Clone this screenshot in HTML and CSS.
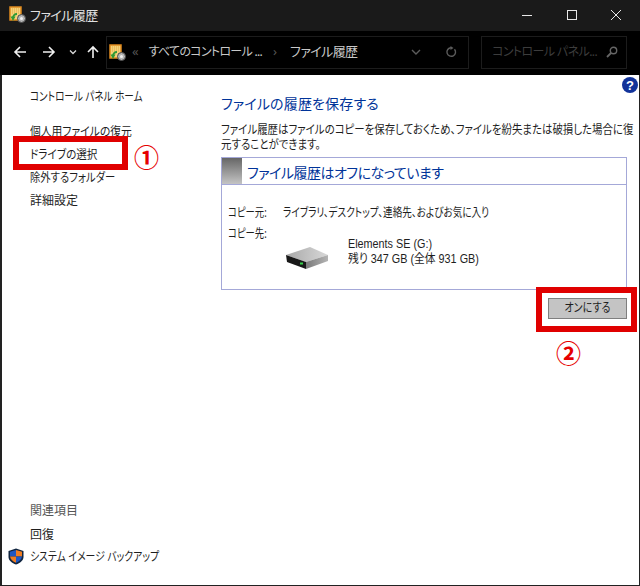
FILE: index.html
```html
<!DOCTYPE html>
<html lang="ja">
<head>
<meta charset="utf-8">
<title>ファイル履歴</title>
<link rel="stylesheet" href="styles.css">
</head>
<body>
<div class="window">
  <header class="titlebar">
    <svg class="fh-icon" viewBox="0 0 17 17"><rect x="1" y="1" width="11" height="13" fill="#f6d27a" stroke="#e08a1e" stroke-width="1.500"/><path d="M3 3h7M3 5h7M3 7h7" stroke="#e0a93f" stroke-dasharray="1 1"/><circle cx="12.500" cy="12.500" r="4" fill="#b4b4b4" stroke="#4a4a4a"/><circle cx="12.500" cy="12.500" r="1.500" fill="#f0f0f0"/><path d="M8 8a4 4 0 0 0-4 4" stroke="#2f9a36" stroke-width="2.200" fill="none"/><path d="M1.500 10.500h5L4 15z" fill="#2f9a36"/></svg>
    <span class="title">ファイル履歴</span>
    <div class="winbtns">
      <svg class="wb" viewBox="0 0 44.500 30"><path d="M17 15.500h10" stroke="#e8e8e8" fill="none"/></svg>
      <svg class="wb" viewBox="0 0 44.500 30"><rect x="17.500" y="10.500" width="9" height="9" stroke="#e8e8e8" fill="none"/></svg>
      <svg class="wb" viewBox="0 0 44.500 30"><path d="M17 10l10 10M27 10l-10 10" stroke="#e8e8e8" fill="none"/></svg>
    </div>
  </header>
  <nav class="navbar">
    <svg class="nb back" viewBox="0 0 14 14"><path d="M13 7H2M7 2L2 7l5 5" stroke="#f0f0f0" stroke-width="1.600" fill="none"/></svg>
    <svg class="nb fwd" viewBox="0 0 14 14"><path d="M1 7h11M7 2l5 5-5 5" stroke="#f0f0f0" stroke-width="1.600" fill="none"/></svg>
    <svg class="nb drop" viewBox="0 0 8 6"><path d="M1 1.500l3 3 3-3" stroke="#d8d8d8" stroke-width="1.300" fill="none"/></svg>
    <svg class="nb up" viewBox="0 0 14 14"><path d="M7 13V2M2 7l5-5 5 5" stroke="#f0f0f0" stroke-width="1.600" fill="none"/></svg>
    <div class="addr">
      <svg class="fh-icon" viewBox="0 0 17 17"><rect x="1" y="1" width="11" height="13" fill="#f6d27a" stroke="#e08a1e" stroke-width="1.500"/><path d="M3 3h7M3 5h7M3 7h7" stroke="#e0a93f" stroke-dasharray="1 1"/><circle cx="12.500" cy="12.500" r="4" fill="#b4b4b4" stroke="#4a4a4a"/><circle cx="12.500" cy="12.500" r="1.500" fill="#f0f0f0"/><path d="M8 8a4 4 0 0 0-4 4" stroke="#2f9a36" stroke-width="2.200" fill="none"/><path d="M1.500 10.500h5L4 15z" fill="#2f9a36"/></svg>
      <span class="crumb-sep">«</span>
      <span class="crumb crumb-all">すべてのコントロール ...</span>
      <span class="crumb-sep gt">›</span>
      <span class="crumb crumb-cur">ファイル履歴</span>
      <svg class="addr-drop" viewBox="0 0 10 6"><path d="M1 1l4 4 4-4" stroke="#5c5c5c" stroke-width="1.400" fill="none"/></svg>
      <svg class="refresh" viewBox="0 0 12 12"><path d="M9.500 3.200A4.300 4.300 0 1 1 6 1.700" stroke="#5c5c5c" stroke-width="1.400" fill="none"/><path d="M5.500 0v4l3-2z" fill="#5c5c5c"/></svg>
    </div>
    <div class="search">
      <span class="search-text">コントロール パネル...</span>
      <svg class="search-icon" viewBox="0 0 12 12"><circle cx="7.500" cy="4.500" r="3.200" stroke="#666" stroke-width="1.400" fill="none"/><path d="M5 7L1 11" stroke="#666" stroke-width="1.800"/></svg>
    </div>
  </nav>
  <div class="content">
    <aside class="sidebar">
      <a class="link home"><span class="sq sq-80">コントロール パネル ホーム</span></a>
      <ul class="tasks">
        <li class="link"><span class="sq sq-90">個人用ファイルの復元</span></li>
        <li class="link"><span class="sq sq-88">ドライブの選択</span></li>
        <li class="link"><span class="sq sq-86">除外するフォルダー</span></li>
        <li class="link">詳細設定</li>
      </ul>
      <div class="related">
        <div class="rel-title">関連項目</div>
        <div class="link">回復</div>
        <div class="link shield-row">
          <svg class="shield" viewBox="0 0 16 17"><path d="M8 .5L15.500 3v6c0 3.500-3.500 6-7.500 7.500C4 15 .5 12.500.5 9V3z" fill="#10243f"/><path d="M8 2L2 3.800V8.500h6z" fill="#1f57c3"/><path d="M8 2l6 1.800V8.500H8z" fill="#ef7d22"/><path d="M2 8.500h6v6.200C5 13.500 2.300 11.500 2 8.500z" fill="#ef7d22"/><path d="M8 8.500h6c-.3 3-3 5-6 6.200z" fill="#1f57c3"/></svg>
          <span class="sq sq-82">システム イメージ バックアップ</span>
        </div>
      </div>
    </aside>
    <main class="main">
      <svg class="help" viewBox="0 0 16 16"><circle cx="8" cy="8" r="8" fill="#12339a"/><text x="8" y="12.500" text-anchor="middle" class="help-q">?</text></svg>
      <h1 class="heading">ファイルの履歴を保存する</h1>
      <p class="desc">ファイル履歴はファイルのコピーを保存しておくため、ファイルを紛失または破損した場合に復元することができます。</p>
      <section class="panel">
        <div class="panel-head">
          <div class="swatch"></div>
          <h2 class="status">ファイル履歴はオフになっています</h2>
        </div>
        <div class="panel-body">
          <div class="row">
            <span class="label"><span class="sq sq-78">コピー元:</span></span>
            <span class="sq sq-80">ライブラリ、デスクトップ、連絡先、およびお気に入り</span>
          </div>
          <div class="row dest">
            <span class="label"><span class="sq sq-78">コピー先:</span></span>
            <div class="drive">
              <svg class="hdd" viewBox="0 0 44 24">
                <defs><linearGradient id="top" x1="0" x2="1" y1="0" y2="0"><stop offset="0" stop-color="#a8a8a8"/><stop offset="1" stop-color="#d8d8d8"/></linearGradient>
                <linearGradient id="side" x1="0" x2="1" y1="0" y2="0"><stop offset="0" stop-color="#7a7a7a"/><stop offset="1" stop-color="#b4b4b4"/></linearGradient></defs>
                <path d="M0 9L24 1l18 8-22 7z" fill="url(#top)"/>
                <path d="M0 9l20 7v7L1 16z" fill="#181818"/>
                <path d="M20 16l22-7v6L20 23z" fill="url(#side)"/>
                <rect x="14" y="16.500" width="3" height="2" fill="#34d04a"/>
              </svg>
              <div class="drive-text">
                <div class="sq sq-90">Elements SE (G:)</div>
                <div class="sq sq-90">残り 347 GB (全体 931 GB)</div>
              </div>
            </div>
          </div>
        </div>
      </section>
      <div class="actions">
        <button class="btn"><span class="sq sq-84">オンにする</span></button>
      </div>
    </main>
  </div>
</div>
<div class="mark mark-drive"></div>
<div class="mark mark-btn"></div>
<span class="num num-1">①</span>
<span class="num num-2">②</span>
</body>
</html>
```
FILE: styles.css
```css
* { box-sizing: border-box; }
html, body { margin: 0; padding: 0; }
body {
  width: 640px;
  height: 586px;
  overflow: hidden;
  position: relative;
  font-family: "Noto Sans", "Noto Sans CJK JP", sans-serif;
  font-feature-settings: "palt";
  font-size: 12px;
  color: #1e1e1e;
  background: #fff;
}
.sq { display: inline-block; white-space: nowrap; transform-origin: left center; }
.sq-78 { transform: scaleX(.78); }
.sq-80 { transform: scaleX(.8); }
.sq-82 { transform: scaleX(.82); }
.sq-84 { transform: scaleX(.84); }
.sq-86 { transform: scaleX(.86); }
.sq-88 { transform: scaleX(.88); }
.sq-90 { transform: scaleX(.9); }
.window { width: 640px; height: 586px; display: flex; flex-direction: column; border: solid #222; border-width: 0 1px 1px 2px; }
.titlebar { height: 31px; background: #1a1a1a; display: flex; align-items: center; padding: 0 0 2px 9px; flex: none; margin: 0 -1px 0 -2px; }
.fh-icon { width: 17px; height: 17px; flex: none; }
.title { color: #e0e0e0; font-size: 13px; margin-left: 4px; letter-spacing: -.55px; }
.winbtns { margin-left: auto; display: flex; padding-right: 1.5px; align-self: flex-start; }
.wb { width: 44.5px; height: 30px; display: block; }
.navbar { height: 44px; background: #000; display: flex; align-items: center; flex: none; margin: 0 -1px 0 -2px; padding-bottom: 2px; }
.nb { display: block; flex: none; }
.back { width: 14px; height: 14px; margin-left: 13px; }
.fwd { width: 14px; height: 14px; margin-left: 15px; }
.drop { width: 8px; height: 6px; margin-left: 13px; }
.up { width: 14px; height: 14px; margin-left: 9px; }
.addr { width: 363px; height: 33px; margin-left: 6px; border: 1px solid #1c1c1c; display: flex; align-items: center; padding-left: 2px; color: #c8c8c8; }
.crumb { white-space: nowrap; padding-bottom: 3px; }
.crumb-all { font-size: 12px; letter-spacing: -.7px; }
.crumb-cur { font-size: 13px; letter-spacing: -.6px; }
.crumb-sep { color: #555; margin: 0 10px 0 6px; font-size: 13px; padding-bottom: 3px; }
.crumb-sep.gt { margin: 0 13px 0 11px; }
.addr-drop { width: 10px; height: 6px; margin-left: auto; }
.refresh { width: 12px; height: 12px; margin: 0 11px 0 24px; }
.search { width: 146px; height: 33px; margin-left: 12px; border: 1px solid #1c1c1c; display: flex; align-items: center; padding: 0 8px 0 10px; color: #3c3c3c; }
.search-text { font-size: 12px; letter-spacing: -.6px; white-space: nowrap; padding-bottom: 3px; }
.search-icon { width: 12px; height: 12px; margin-left: auto; }
.content { flex: 1; display: flex; background: #fff; min-height: 0; }
.sidebar { width: 219px; flex: none; display: flex; flex-direction: column; padding: 13px 0 18px 28px; }
.link { color: #1e1e1e; line-height: 23px; display: block; white-space: nowrap; }
.home { line-height: 18px; }
.tasks { list-style: none; margin: 14px 0 0; padding: 0; }
.related { margin-top: auto; }
.rel-title { color: #555; line-height: 24px; }
.shield-row { position: relative; line-height: 21px; }
.shield { position: absolute; left: -22px; top: 2px; width: 16px; height: 17px; }
.main { flex: 1; padding: 19px 0 0; position: relative; min-width: 0; }
.help { position: absolute; top: 2px; right: 1px; width: 16px; height: 16px; }
.help-q { font: bold 13px "Liberation Sans", sans-serif; fill: #fff; }
.heading { margin: 0; font-size: 14px; font-weight: 400; color: #003399; line-height: 20px; letter-spacing: .15px; }
.desc { margin: 8px 0 0; width: 476px; line-height: 15px; transform: scaleX(.87); transform-origin: left top; }
.panel { width: 406px; height: 133px; margin-top: 5px; border: 1px solid #a4a8d8; }
.panel-head { height: 27px; display: flex; border-bottom: 1px solid #a4a8d8; }
.swatch { width: 20px; background: linear-gradient(#666, #c4c4c4); }
.status { margin: 0 0 0 5px; font-size: 14px; font-weight: 400; color: #003399; line-height: 29px; letter-spacing: -.5px; }
.panel-body { padding: 19px 0 0 6px; }
.row { display: flex; line-height: 17px; }
.label { width: 55px; flex: none; }
.dest { margin-top: 4px; }
.drive { display: flex; align-items: flex-start; margin-top: 2px; }
.hdd { width: 44px; height: 24px; flex: none; margin: 19px 0 0 3px; }
.drive-text { margin-left: 18px; padding-top: 10px; line-height: 15px; display: flex; flex-direction: column; font-family: "Liberation Sans", "Noto Sans CJK JP", sans-serif; }
.actions { width: 406px; display: flex; justify-content: flex-end; margin-top: 8px; }
.btn { width: 79px; height: 21px; padding: 0; background: #c4c4c4; border: 1px solid #7f7f7f; font: inherit; font-feature-settings: "palt"; color: #1e1e1e; line-height: 17px; display: flex; justify-content: center; }
.btn .sq { transform-origin: center; }
.mark { position: absolute; border: 6px solid #e00000; pointer-events: none; }
.mark-drive { left: 13px; top: 136px; width: 115px; height: 34px; }
.mark-btn { left: 536px; top: 287px; width: 101px; height: 45px; }
.num { position: absolute; color: #e60000; font-size: 25px; line-height: 26px; font-weight: 700; }
.num-1 { left: 134px; top: 144px; }
.num-2 { left: 556px; top: 340px; }
```
